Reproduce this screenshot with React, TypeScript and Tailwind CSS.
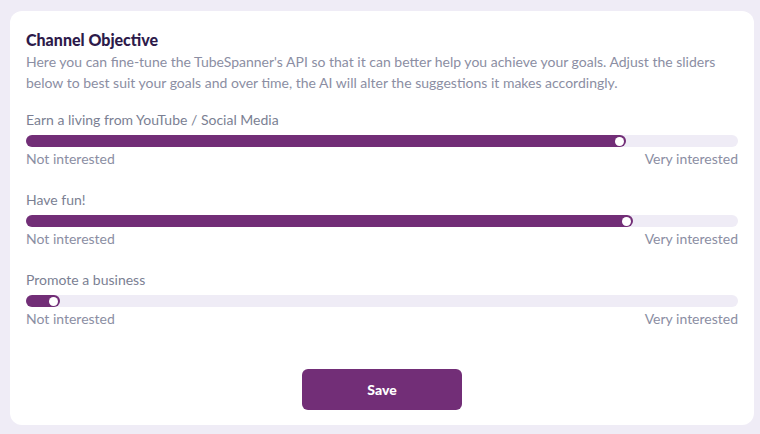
import React from "react";

const sliders = [
  { label: "Earn a living from YouTube / Social Media", value: 84.3 },
  { label: "Have fun!", value: 85.3 },
  { label: "Promote a business", value: 4.8 },
];

const Slider = ({ label, value }: { label: string; value: number }) => (
  <div className="flex flex-col">
    <span className="text-[14px] leading-[20px] text-[#7b7f93]">{label}</span>
    <div className="mt-[5px] h-[12px] w-full rounded-full bg-[#efecf6]">
      <div
        className="flex h-full items-center justify-end rounded-full bg-[#722e77] pr-[2px]"
        style={{ width: `${value}%` }}
      >
        <div className="h-[9px] w-[9px] rounded-full bg-white" />
      </div>
    </div>
    <div className="mt-[2px] flex justify-between text-[14px] leading-[20px] text-[#8b8ea3]">
      <span>Not interested</span>
      <span>Very interested</span>
    </div>
  </div>
);

export default function App() {
  return (
    <div
      className="min-h-[434px] w-[760px] bg-[#efecf6] pl-[10px] pr-[6px] pt-[11px] pb-[9px]"
      style={{ fontFamily: "Lato, 'Noto Sans', sans-serif" }}
    >
      <div className="flex flex-col rounded-[12px] bg-white px-[16px] pt-[19px] pb-[15px]">
        <h2 className="text-[16px] font-black leading-[20px] text-[#2d1a4a]">
          Channel Objective
        </h2>
        <p className="mt-[1px] text-[14px] leading-[21px] text-[#8b8ea3]">
          Here you can fine-tune the TubeSpanner's API so that it can better help you achieve your goals. Adjust the sliders below to best suit your goals and over time, the AI will alter the suggestions it makes accordingly.
        </p>
        <div className="mt-[17px] flex flex-col gap-[21px]">
          {sliders.map((s) => (
            <Slider key={s.label} label={s.label} value={s.value} />
          ))}
        </div>
        <div className="mt-[40px] flex justify-center">
          <button className="h-[41px] w-[160px] rounded-[6px] bg-[#722e77] text-[14px] font-black text-white">
            Save
          </button>
        </div>
      </div>
    </div>
  );
}
